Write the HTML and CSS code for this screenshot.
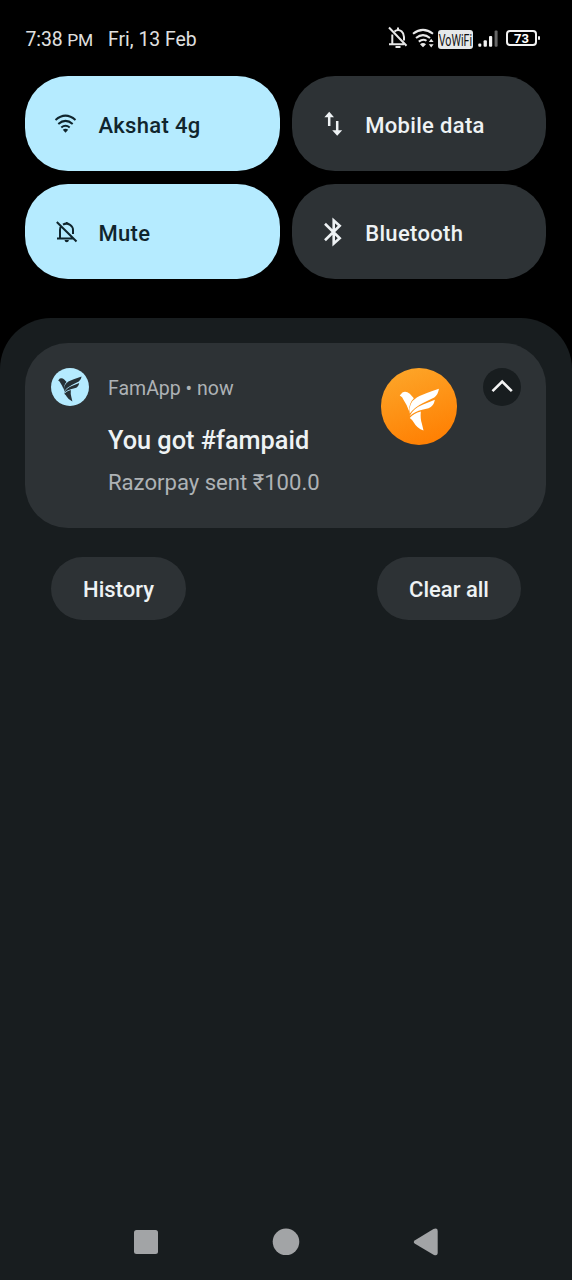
FILE: index.html
```html
<!DOCTYPE html>
<html lang="en">
<head>
<meta charset="utf-8">
<title>Notifications</title>
<link rel="stylesheet" href="styles.css">
</head>
<body>
<svg class="defs" width="0" height="0" aria-hidden="true">
  <symbol id="bird" viewBox="33 24 230 230">
    <path d="M89 106L97 97Q108 92 119 101L131 114Q116 129 117 153Q111 134 101 120Q97 109 89 106Z"/>
    <path d="M119 160Q113 129 140 112Q160 101 206 86Q204 103 192 112L157 129Q133 141 119 160Z"/>
    <path d="M118 168Q130 144 157 134L194 119Q190 140 175 144L156 149Q134 154 118 168Z"/>
    <path d="M119 173Q131 159 152 154Q150 176 155 190L160 211Q140 203 132 188Q129 180 119 173Z"/>
  </symbol>
</svg>
<div class="screen">
  <header class="status">
    <span class="time">7:38 <small>PM</small></span>
    <span class="date">Fri, 13 Feb</span>
    <div class="status-icons">
      <svg class="ic-bell" width="20" height="24" viewBox="388 26 20 24" fill="none" stroke="#e8e8e8" stroke-width="2">
        <path d="M394.5 31.5Q398 28.5 401.5 31.3Q404 33.5 404 37V40.5M392.3 34.5V44M389 44.3H404M389 27.5L406.5 45.8"/>
        <path d="M395.5 47H400.5M398 27.5V30"/>
      </svg>
      <svg class="ic-wifi" width="23" height="20" viewBox="412 28 23 20" fill="none" stroke="#e8e8e8" stroke-width="2">
        <path d="M413 33.8Q423 26 433 33.8M416 38Q423 32.2 430 38M418.8 41.6Q423 38.4 426.5 40.8"/>
        <path d="M420 44.2Q423 42 426 44.2L423 47.2Z M428.8 42L431.2 38.8L433.6 42ZM428.8 44.2H433.6L431.2 47.4Z" fill="#e8e8e8" stroke="none"/>
      </svg>
      <span class="vowifi"><span>VoWiFi</span></span>
      <svg class="ic-signal" width="20" height="18" viewBox="478 30 20 18" fill="#f2f2f2">
        <rect x="478.3" y="43.5" width="3" height="3.2" rx="1"/><rect x="483.6" y="40.3" width="3.3" height="6.4" rx="1"/><rect x="489" y="36" width="3.2" height="10.7" rx="1"/><rect x="494.6" y="30.5" width="3" height="16.2" rx="1" fill="#666"/>
      </svg>
      <span class="battery">73</span>
    </div>
  </header>

  <section class="tiles">
    <div class="tile on">
      <svg width="24" height="24" viewBox="54 112 24 24" fill="none" stroke="#10252d" stroke-width="2">
        <path d="M55.5 120Q65.5 111.3 75.5 120M58.3 124Q65.5 117.8 72.7 124M61.3 127.5Q65.5 124 69.7 127.5"/>
        <path d="M62.8 129.7Q65.5 128 68.2 129.7L65.5 132.7Z" fill="#10252d" stroke="none"/>
      </svg>
      <span class="label">Akshat 4g</span>
    </div>
    <div class="tile">
      <svg width="24" height="28" viewBox="321.3 110 24 28" fill="none" stroke="#eef2f4" stroke-width="2.5">
        <path d="M329.5 126V114M337.5 121V133"/>
        <path d="M324.7 117.2L329.5 111.8L334.3 117.2ZM332.5 130.2H342.5L337.5 135.7Z" fill="#eef2f4" stroke="none"/>
      </svg>
      <span class="label">Mobile data</span>
    </div>
    <div class="tile on">
      <svg width="24" height="24" viewBox="54 220 24 24" fill="none" stroke="#10252d" stroke-width="2">
        <path d="M56.8 222L76.5 241.5M57 238.4H73M60 238V230Q60 227 61.5 226M63 224.7Q66.5 222.5 70 224.8Q73 227 73 230V234M66.7 222V224"/>
        <path d="M64.5 240H69Q68.5 242.2 66.7 242.2T64.5 240Z" fill="#10252d" stroke="none"/>
      </svg>
      <span class="label">Mute</span>
    </div>
    <div class="tile">
      <svg width="24" height="30" viewBox="321.3 217 24 30" fill="none" stroke="#eef2f4" stroke-width="2.6">
        <path d="M325.3 223.8L340 238.2L334 243.5V220.5L340 225.8L325.3 240.2"/>
      </svg>
      <span class="label">Bluetooth</span>
    </div>
  </section>

  <main class="shade">
    <article class="card">
      <div class="app-icon"><svg width="46" height="46" viewBox="0 0 46 46"><use href="#bird" width="46" height="46" fill="#263136"/></svg></div>
      <div class="message">
        <div class="source">FamApp • now</div>
        <div class="title">You got #fampaid</div>
        <div class="body">Razorpay sent ₹100.0</div>
      </div>
      <div class="avatar"><svg width="77" height="77" viewBox="0 0 77 77"><use href="#bird" width="77" height="77" fill="#fff"/></svg></div>
      <div class="collapse"><svg width="38" height="38" viewBox="0 0 38 38" fill="none" stroke="#f4f4f4" stroke-width="2.6"><path d="M9.5 23.2L19.2 13.5L28.8 23.2"/></svg></div>
    </article>
    <div class="actions">
      <div class="button history"><span>History</span></div>
      <div class="button clear"><span>Clear all</span></div>
    </div>
    <nav class="nav">
      <svg width="306" height="30" viewBox="133 1227 306 30" fill="#a2a4a6">
        <rect x="134" y="1230" width="24" height="24" rx="2.5"/>
        <circle cx="286" cy="1241.8" r="13.3"/>
        <path d="M415 1240.2L433.5 1229Q437.7 1227.5 437.7 1231V1252.5Q437.7 1256.5 433.5 1254.7L415 1243.8Q412.5 1242 415 1240.2Z"/>
      </svg>
    </nav>
  </main>
</div>
</body>
</html>
```
FILE: styles.css
```css
* { box-sizing: border-box; }
body { margin: 0; background: #000; font-family: Roboto, "Noto Sans", sans-serif; }
svg { display: block; flex: none; }
.defs { position: absolute; }
.screen { width: 572px; height: 1280px; display: flex; flex-direction: column; overflow: hidden; background: #000; }
.status { height: 76px; padding-left: 25.5px; display: flex; align-items: flex-start; color: #e0e0e0; font-size: 19.4px; line-height: 24px; white-space: pre; }
.time, .date { margin-top: 27.5px; }
.time { width: 82.5px; letter-spacing: -.1px; }
.time small { font-size: 17.4px; }
.date { width: 280px; }
.status-icons { display: flex; }
.ic-bell { margin-top: 26px; }
.ic-wifi { margin: 28px 0 0 4px; }
.vowifi { margin: 30px 0 0 3px; width: 35px; height: 18.5px; border-radius: 3px; background: #e6e9ea; color: #111; font-size: 17px; line-height: 21px; display: flex; justify-content: center; }
.vowifi span { transform: scaleX(.63); }
.ic-signal { margin: 30px 0 0 5px; }
.battery { position: relative; margin: 30px 0 0 8px; width: 31px; height: 16px; border: 2px solid #f2f2f2; border-radius: 4px; color: #fff; font-size: 13px; font-weight: 700; line-height: 13px; text-align: center; }
.battery::after { content: ""; position: absolute; right: -5px; top: 4px; width: 2px; height: 4px; border-radius: 1px; background: #f2f2f2; }
.tiles { height: 242px; padding: .3px 0 0 25.4px; display: grid; grid-template-columns: 254.2px 254.3px; grid-template-rows: 95.1px 95.3px; gap: 12.8px 12.6px; flex: none; }
.tile { display: flex; align-items: center; gap: 20px; padding-left: 29px; border-radius: 43px; background: #2d3235; color: #eef2f4; font-size: 22px; font-weight: 500; line-height: 30px; letter-spacing: .33px; white-space: nowrap; }
.label { padding-top: 4px; }
.tile.on { background: #b5ebff; color: #10252d; }
.shade { flex: 1; min-height: 0; padding-top: 25.3px; border-radius: 51px 51px 0 0; background: #181d1f; display: flex; flex-direction: column; }
.card { width: 521px; height: 184.5px; margin-left: 25.4px; padding: 25px 25.6px; border-radius: 43px; background: #2d3235; display: flex; }
.app-icon { width: 38px; height: 38px; border-radius: 50%; background: #b5ebff; display: flex; align-items: center; justify-content: center; }
.message { width: 273px; margin-left: 19px; white-space: nowrap; }
.source { font-size: 19.5px; line-height: 24px; margin-top: 8.8px; color: #aeb2b5; }
.title { font-size: 25.3px; line-height: 32px; margin-top: 24.4px; font-weight: 500; color: #eef2f4; }
.body { font-size: 22.1px; line-height: 28px; margin-top: 11px; color: #aeb2b5; }
.avatar { width: 76.5px; height: 76.5px; border-radius: 50%; background: linear-gradient(160deg, #fda629 5%, #ff7d00 95%); }
.collapse { width: 38px; height: 38px; margin-left: 25.5px; border-radius: 50%; background: #181d1f; }
.actions { display: flex; justify-content: space-between; margin: 29px 51px 0; }
.button { height: 63px; border-radius: 32px; background: #2d3235; color: #eef2f4; font-size: 22px; font-weight: 500; display: flex; align-items: center; justify-content: center; padding-top: 2px; }
.history { width: 135px; }
.clear { width: 144px; }
.nav { margin: auto 0 23px 133px; }
```
